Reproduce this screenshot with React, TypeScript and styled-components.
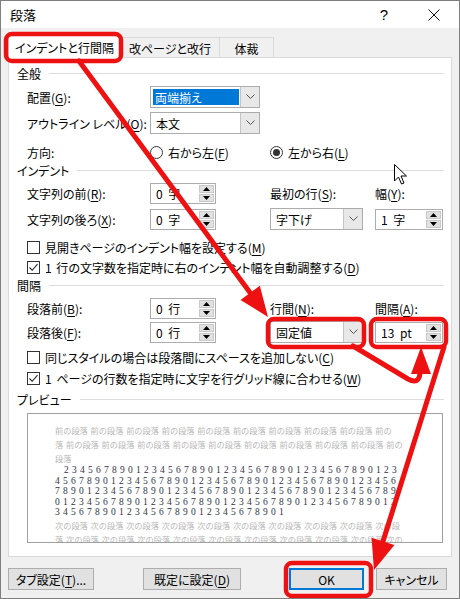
import styled, { createGlobalStyle } from 'styled-components';

const GlobalStyle = createGlobalStyle`
  html, body {
    margin: 0;
    padding: 0;
    background: #fff;
  }
  body {
    font-family: "Noto Sans CJK JP", "Noto Sans", sans-serif;
    font-size: 12px;
    color: #000;
    font-feature-settings: "palt";
  }
`;

const RED = '#ee1111';

const Window = styled.div`
  position: relative;
  width: 460px;
  height: 599px;
  box-sizing: border-box;
  border: 1px solid #7f7f7f;
  background: #f0f0f0;
  display: flex;
  flex-direction: column;
  overflow: hidden;
`;

const TitleBar = styled.div`
  height: 27px;
  flex-shrink: 0;
  background: #fff;
  display: flex;
  align-items: center;
  padding-left: 9px;
  font-size: 13px;
`;

const Title = styled.span`
  flex: 1;
`;

const TitleButton = styled.div`
  width: 50px;
  height: 27px;
  display: flex;
  align-items: center;
  justify-content: center;
  font-family: "Liberation Sans", sans-serif;
  font-size: 15px;
`;

const Body = styled.div`
  padding: 0 7px;
  display: flex;
  flex-direction: column;
`;

const TabStrip = styled.div`
  display: flex;
  align-items: flex-end;
  height: 23px;
  margin-top: 7px;
`;

const Tab = styled.div<{ $w: number; $active?: boolean }>`
  position: relative;
  z-index: ${(p) => (p.$active ? 2 : 0)};
  width: ${(p) => p.$w}px;
  height: ${(p) => (p.$active ? 23 : 21)}px;
  box-sizing: border-box;
  border: 1px solid #d9d9d9;
  border-bottom: none;
  margin-left: ${(p) => (p.$active ? 0 : -1)}px;
  background: ${(p) => (p.$active ? '#fff' : '#f0f0f0')};
  display: flex;
  align-items: center;
  justify-content: center;
`;

const Panel = styled.div`
  position: relative;
  z-index: 1;
  margin-top: -1px;
  height: 500px;
  box-sizing: border-box;
  background: #fff;
  border: 1px solid #d9d9d9;
  padding: 7px 7px 0 8px;
  display: flex;
  flex-direction: column;
`;

const Legend = styled.div<{ $mt?: number }>`
  display: flex;
  align-items: center;
  gap: 8px;
  height: 16px;
  margin-top: ${(p) => p.$mt ?? 0}px;
  &::after {
    content: '';
    flex: 1;
    height: 1px;
    background: #dcdcdc;
  }
`;

const Row = styled.div<{ $h: number; $mt: number }>`
  display: grid;
  grid-template-columns: 123px 120px 105px 1fr;
  align-items: center;
  height: ${(p) => p.$h}px;
  margin-top: ${(p) => p.$mt}px;
  padding-left: 10px;
`;

const Label = styled.span`
  white-space: nowrap;
`;

const Acc = styled.u`
  text-underline-offset: 2px;
`;

const Combo = styled.div<{ $w: number }>`
  width: ${(p) => p.$w}px;
  height: 22px;
  box-sizing: border-box;
  border: 1px solid #acacac;
  background: #fff;
  display: flex;
`;

const ComboText = styled.div<{ $selected?: boolean }>`
  flex: 1;
  display: flex;
  align-items: center;
  margin: ${(p) => (p.$selected ? '2px 1px 2px 2px' : '0')};
  padding: 0 ${(p) => (p.$selected ? 2 : 5)}px;
  background: ${(p) => (p.$selected ? '#0078d7' : 'transparent')};
  color: ${(p) => (p.$selected ? '#fff' : '#000')};
`;

const ComboButton = styled.div`
  width: 18px;
  border-left: 1px solid #c4c4c4;
  background: #e8e8e8;
  display: flex;
  align-items: center;
  justify-content: center;
`;

const Spin = styled.div<{ $w: number }>`
  width: ${(p) => p.$w}px;
  height: 21px;
  box-sizing: border-box;
  border: 1px solid #acacac;
  background: #fff;
  display: flex;
`;

const SpinText = styled.div`
  flex: 1;
  display: flex;
  align-items: center;
  padding-left: 5px;
  white-space: pre;
  word-spacing: 3px;
`;

const SpinButtons = styled.div`
  width: 15px;
  margin: 1px;
  display: flex;
  flex-direction: column;
  gap: 1px;
`;

const SpinHalf = styled.div`
  flex: 1;
  background: #e1e1e1;
  border: 1px solid #c9c9c9;
  display: flex;
  align-items: center;
  justify-content: center;
`;

const CheckRow = styled.div<{ $mt: number }>`
  display: flex;
  align-items: center;
  height: 16px;
  margin-top: ${(p) => p.$mt}px;
  padding-left: 10px;
  white-space: pre;
  word-spacing: 2px;
`;

const Box = styled.span`
  width: 13px;
  height: 13px;
  box-sizing: border-box;
  border: 1px solid #333;
  background: #fff;
  margin-right: 5px;
  display: inline-flex;
  align-items: center;
  justify-content: center;
  flex-shrink: 0;
`;

const RadioLabel = styled.span`
  display: flex;
  align-items: center;
  white-space: nowrap;
`;

const RadioCircle = styled.span<{ $on?: boolean }>`
  width: 13px;
  height: 13px;
  box-sizing: border-box;
  border: 1px solid #333;
  border-radius: 50%;
  background: #fff;
  margin-right: 5px;
  display: inline-flex;
  align-items: center;
  justify-content: center;
  &::after {
    content: '';
    width: 7px;
    height: 7px;
    border-radius: 50%;
    background: ${(p) => (p.$on ? '#333' : 'transparent')};
  }
`;

const Preview = styled.div`
  margin: 6px 0 0 10px;
  width: 416px;
  height: 130px;
  box-sizing: border-box;
  border: 1px solid #a0a0a0;
  padding: 9px 0 0 27px;
  overflow: hidden;
`;

const GhostLine = styled.div`
  height: 14px;
  line-height: 14px;
  font-size: 8.2px;
  word-spacing: 1px;
  color: #b8b8b8;
  white-space: pre;
  font-feature-settings: normal;
`;

const DigitLine = styled.div<{ $indent?: boolean }>`
  height: 10.5px;
  line-height: 10.5px;
  font-family: "Liberation Serif", serif;
  font-size: 9.5px;
  letter-spacing: 3.25px;
  color: #333348;
  white-space: pre;
  text-indent: ${(p) => (p.$indent ? 9 : 0)}px;
`;

const ButtonRow = styled.div`
  display: flex;
  margin-top: 11px;
`;

const Button = styled.div<{ $w: number; $ml?: number; $default?: boolean }>`
  width: ${(p) => p.$w}px;
  height: 22px;
  box-sizing: border-box;
  margin-left: ${(p) => p.$ml ?? 0}px;
  border: 1px solid ${(p) => (p.$default ? '#0078d7' : '#adadad')};
  box-shadow: ${(p) => (p.$default ? 'inset 0 0 0 1px #0078d7' : 'none')};
  background: #e1e1e1;
  display: flex;
  align-items: center;
  justify-content: center;
  white-space: nowrap;
`;

const Overlay = styled.svg`
  position: absolute;
  left: 0;
  top: 0;
  pointer-events: none;
  z-index: 10;
`;

const Chevron = () => (
  <svg width="9" height="6" viewBox="0 0 9 6">
    <polyline points="0.5,0.5 4.5,4.5 8.5,0.5" fill="none" stroke="#555" strokeWidth="1" />
  </svg>
);

const Tri = ({ up }: { up?: boolean }) => (
  <svg width="7" height="4" viewBox="0 0 7 4">
    <polygon points={up ? '3.5,0 7,4 0,4' : '0,0 7,0 3.5,4'} fill="#000" />
  </svg>
);

const Check = () => (
  <svg width="11" height="11" viewBox="0 0 11 11">
    <polyline points="1.5,5.5 4.2,8.3 9.5,2.2" fill="none" stroke="#222" strokeWidth="1.1" />
  </svg>
);

const Dropdown = ({ w, value, selected }: { w: number; value: string; selected?: boolean }) => (
  <Combo $w={w}>
    <ComboText $selected={selected}>{value}</ComboText>
    <ComboButton>
      <Chevron />
    </ComboButton>
  </Combo>
);

const Spinner = ({ w, value }: { w: number; value: string }) => (
  <Spin $w={w}>
    <SpinText>{value}</SpinText>
    <SpinButtons>
      <SpinHalf>
        <Tri up />
      </SpinHalf>
      <SpinHalf>
        <Tri />
      </SpinHalf>
    </SpinButtons>
  </Spin>
);

const CheckItem = ({ mt, on, children }: { mt: number; on?: boolean; children: React.ReactNode }) => (
  <CheckRow $mt={mt}>
    <Box>{on && <Check />}</Box>
    {children}
  </CheckRow>
);

// arrow head polygon pointing at (x2, y2) along the line from (x1, y1)
const head = (x1: number, y1: number, x2: number, y2: number, len: number, half: number) => {
  const dx = x2 - x1;
  const dy = y2 - y1;
  const d = Math.hypot(dx, dy);
  const ux = dx / d;
  const uy = dy / d;
  const bx = x2 - ux * len;
  const by = y2 - uy * len;
  return {
    points: `${x2},${y2} ${bx - uy * half},${by + ux * half} ${bx + uy * half},${by - ux * half}`,
    bx: x2 - ux * (len - 4),
    by: y2 - uy * (len - 4),
  };
};

const Annotations = () => {
  const a1 = head(78, 60, 267, 316, 30, 12);
  const a3 = head(443, 346, 373, 569, 30, 12);
  return (
    <Overlay width="460" height="599" viewBox="0 0 460 599">
      <g fill="none" stroke={RED} strokeWidth="4.5" strokeLinejoin="round" strokeLinecap="round">
        <rect x="5" y="33" width="115" height="27" rx="6" />
        <rect x="267" y="318" width="96" height="28" rx="6" />
        <rect x="370" y="318" width="75" height="28" rx="6" />
        <rect x="285" y="562" width="85" height="33" rx="6" />
        <line x1="78" y1="60" x2={a1.bx} y2={a1.by} strokeWidth="5" />
        <path d="M352 345 L407 378 Q418 384 419 372 L419 368" strokeWidth="5" />
        <line x1="443" y1="346" x2={a3.bx} y2={a3.by} strokeWidth="5" />
      </g>
      <g fill={RED}>
        <polygon points={a1.points} />
        <polygon points="420,346 410,373 430,373" />
        <polygon points={a3.points} />
      </g>
      <path
        d="M393.5 163.5 L393.5 180 L397.5 176 L400.5 183 L403 182 L400 175 L405.5 175 Z"
        fill="#fff"
        stroke="#000"
        strokeWidth="1"
        strokeLinejoin="round"
      />
    </Overlay>
  );
};

const mae = '前の段落 前の段落 前の段落 前の段落 前の段落 前の段落 前の段落 前の段落 前の段落 前の';
const mae2 = '落 前の段落 前の段落 前の段落 前の段落 前の段落 前の段落 前の段落 前の段落 前の段落 前の';
const tsugi = '次の段落 次の段落 次の段落 次の段落 次の段落 次の段落 次の段落 次の段落 次の段落 次の段';
const tsugi2 = '落 次の段落 次の段落 次の段落 次の段落 次の段落 次の段落 次の段落 次の段落 次の段落 次の';
const digits = [
  '234567890123456789012345678901234567890123',
  '4567890123456789012345678901234567890123456',
  '7890123456789012345678901234567890123456789',
  '0123456789012345678901234567890123456789012',
  '34567890123456789012345678901',
];

export default function App() {
  return (
    <>
      <GlobalStyle />
      <Window>
        <TitleBar>
          <Title>段落</Title>
          <TitleButton>?</TitleButton>
          <TitleButton>
            <svg width="12" height="12" viewBox="0 0 12 12">
              <path d="M0.5 0.5 L11.5 11.5 M11.5 0.5 L0.5 11.5" stroke="#111" strokeWidth="1" />
            </svg>
          </TitleButton>
        </TitleBar>
        <Body>
          <TabStrip>
            <Tab $w={113} $active>
              インデントと行間隔
            </Tab>
            <Tab $w={100}>改ページと改行</Tab>
            <Tab $w={55}>体裁</Tab>
          </TabStrip>
          <Panel>
            <Legend>全般</Legend>
            <Row $h={22} $mt={5}>
              <Label>
                配置(<Acc>G</Acc>):
              </Label>
              <Dropdown w={110} value="両端揃え" selected />
            </Row>
            <Row $h={22} $mt={4}>
              <Label>
                アウトライン レベル(<Acc>O</Acc>):
              </Label>
              <Dropdown w={110} value="本文" />
            </Row>
            <Row $h={20} $mt={8}>
              <Label>方向:</Label>
              <RadioLabel>
                <RadioCircle />
                右から左(<Acc>F</Acc>)
              </RadioLabel>
              <RadioLabel>
                <RadioCircle $on />
                左から右(<Acc>L</Acc>)
              </RadioLabel>
            </Row>
            <Legend>インデント</Legend>
            <Row $h={21} $mt={5}>
              <Label>
                文字列の前(<Acc>R</Acc>):
              </Label>
              <Spinner w={66} value="0 字" />
              <Label>
                最初の行(<Acc>S</Acc>):
              </Label>
              <Label>
                幅(<Acc>Y</Acc>):
              </Label>
            </Row>
            <Row $h={21} $mt={4}>
              <Label>
                文字列の後ろ(<Acc>X</Acc>):
              </Label>
              <Spinner w={66} value="0 字" />
              <Dropdown w={93} value="字下げ" />
              <Spinner w={68} value="1 字" />
            </Row>
            <CheckItem mt={10}>
              見開きページのインデント幅を設定する(<Acc>M</Acc>)
            </CheckItem>
            <CheckItem mt={4} on>
              1 行の文字数を指定時に右のインデント幅を自動調整する(<Acc>D</Acc>)
            </CheckItem>
            <Legend $mt={2}>間隔</Legend>
            <Row $h={21} $mt={5}>
              <Label>
                段落前(<Acc>B</Acc>):
              </Label>
              <Spinner w={66} value="0 行" />
              <Label>
                行間(<Acc>N</Acc>):
              </Label>
              <Label>
                間隔(<Acc>A</Acc>):
              </Label>
            </Row>
            <Row $h={22} $mt={2}>
              <Label>
                段落後(<Acc>F</Acc>):
              </Label>
              <Spinner w={66} value="0 行" />
              <Dropdown w={93} value="固定値" />
              <Spinner w={68} value="13 pt" />
            </Row>
            <CheckItem mt={6}>
              同じスタイルの場合は段落間にスペースを追加しない(<Acc>C</Acc>)
            </CheckItem>
            <CheckItem mt={5} on>
              1 ページの行数を指定時に文字を行グリッド線に合わせる(<Acc>W</Acc>)
            </CheckItem>
            <Legend $mt={5}>プレビュー</Legend>
            <Preview>
              <GhostLine>{mae}</GhostLine>
              <GhostLine>{mae2}</GhostLine>
              <GhostLine>段落</GhostLine>
              {digits.map((d, i) => (
                <DigitLine key={i} $indent={i === 0}>
                  {d}
                </DigitLine>
              ))}
              <GhostLine>{tsugi}</GhostLine>
              <GhostLine>{tsugi2}</GhostLine>
            </Preview>
          </Panel>
          <ButtonRow>
            <Button $w={86}>
              タブ設定(<Acc>T</Acc>)...
            </Button>
            <Button $w={98} $ml={49}>
              既定に設定(<Acc>D</Acc>)
            </Button>
            <Button $w={75} $ml={48} $default>
              OK
            </Button>
            <Button $w={71} $ml={12}>
              キャンセル
            </Button>
          </ButtonRow>
        </Body>
        <Annotations />
      </Window>
    </>
  );
}
